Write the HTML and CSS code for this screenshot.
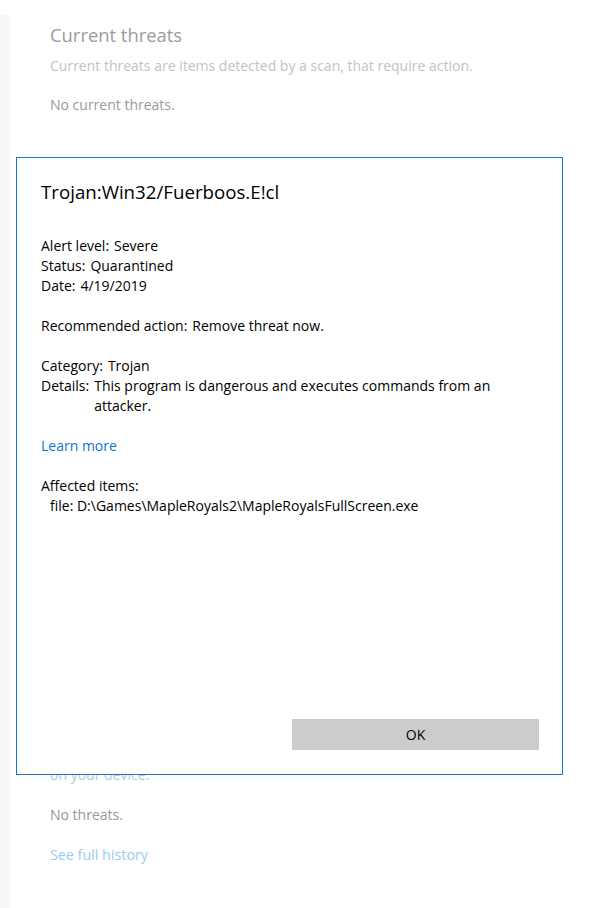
FILE: index.html
```html
<!DOCTYPE html>
<html>

<head>
    <title>Windows Security - Threat details</title>
    <link rel="stylesheet" href="styles.css">
</head>

<body>

    <div class="page">
        <div class="sidebar"></div>

        <div class="content">
            <section class="group">
                <h2>Current threats</h2>
                <p class="hint">Current threats are items detected by a scan, that require action.</p>
                <p class="state">No current threats.</p>
            </section>

            <section class="group history">
                <h2>Threat history</h2>
                <p class="hint">Quarantined threats have been isolated and prevented from running<br>on your device.</p>
                <p class="state">No threats.</p>
                <a class="history-link" href="#">See full history</a>
            </section>
        </div>
    </div>

    <div class="dialog">
        <h1>Trojan:Win32/Fuerboos.E!cl</h1>

        <div class="block">
            <div class="row"><span>Alert level:</span><span>Severe</span></div>
            <div class="row"><span>Status:</span><span>Quarantined</span></div>
            <div class="row"><span>Date:</span><span>4/19/2019</span></div>
        </div>

        <div class="block">
            <div class="row"><span>Recommended action:</span><span>Remove threat now.</span></div>
        </div>

        <div class="block">
            <div class="row"><span>Category:</span><span>Trojan</span></div>
            <div class="row"><span>Details:</span><span class="wrap">This program is dangerous and executes commands from an attacker.</span></div>
        </div>

        <div class="block">
            <a class="learn" href="#">Learn more</a>
        </div>

        <div class="block">
            <div>Affected items:</div>
            <div class="file">file: D:\Games\MapleRoyals2\MapleRoyalsFullScreen.exe</div>
        </div>

        <div class="actions">
            <button class="ok">OK</button>
        </div>
    </div>

</body>

</html>
```

FILE: styles.css
```css
body {
    margin: 0;
    font-family: "Open Sans", "Noto Sans", sans-serif;
    background-color: #ffffff;
    color: #000000;
}

.page {
    display: flex;
    min-height: 908px;
}

.sidebar {
    width: 10px;
    margin-top: 15px;
    background-color: #f7f7f7;
}

.content {
    padding-left: 40px;
    padding-top: 22px;
}

.group h2 {
    margin: 0;
    font-size: 18.4px;
    font-weight: normal;
    line-height: 26px;
    color: #9b9b9b;
}

.group .hint {
    margin: 8px 0 0 0;
    font-size: 14px;
    line-height: 20px;
    color: #c3c3c3;
}

.group .state {
    margin: 19px 0 0 0;
    font-size: 14px;
    line-height: 20px;
    color: #999999;
}

.history {
    margin-top: 596px;
}

.history .state {
    margin-top: 20px;
}

.history-link {
    display: block;
    margin-top: 20px;
    font-size: 14.3px;
    line-height: 20px;
    color: #9ccbf2;
    text-decoration: none;
}

/* the dialog sits on top of the page */
.dialog {
    position: absolute;
    left: 16px;
    top: 157px;
    width: 547px;
    height: 618px;
    box-sizing: border-box;
    border: 1px solid #1677d2;
    background-color: #ffffff;
    padding: 20px 23px 24px 24px;
    display: flex;
    flex-direction: column;
    font-size: 14px;
    line-height: 20px;
}

.dialog h1 {
    margin: 0 0 30px 0;
    font-size: 18.7px;
    font-weight: normal;
    line-height: 28px;
}

.block {
    margin-bottom: 20px;
}

.row {
    display: flex;
    gap: 5px;
}

.row .wrap {
    flex: 1;
    padding-right: 40px;
}

.learn {
    color: #0a74d0;
    text-decoration: none;
}

.file {
    padding-left: 9px;
}

.actions {
    margin-top: auto;
    display: flex;
    justify-content: flex-end;
}

.ok {
    width: 247px;
    height: 31px;
    border: none;
    background-color: #cccccc;
    font-family: inherit;
    font-size: 14px;
    color: #000000;
    padding: 0;
}
```
